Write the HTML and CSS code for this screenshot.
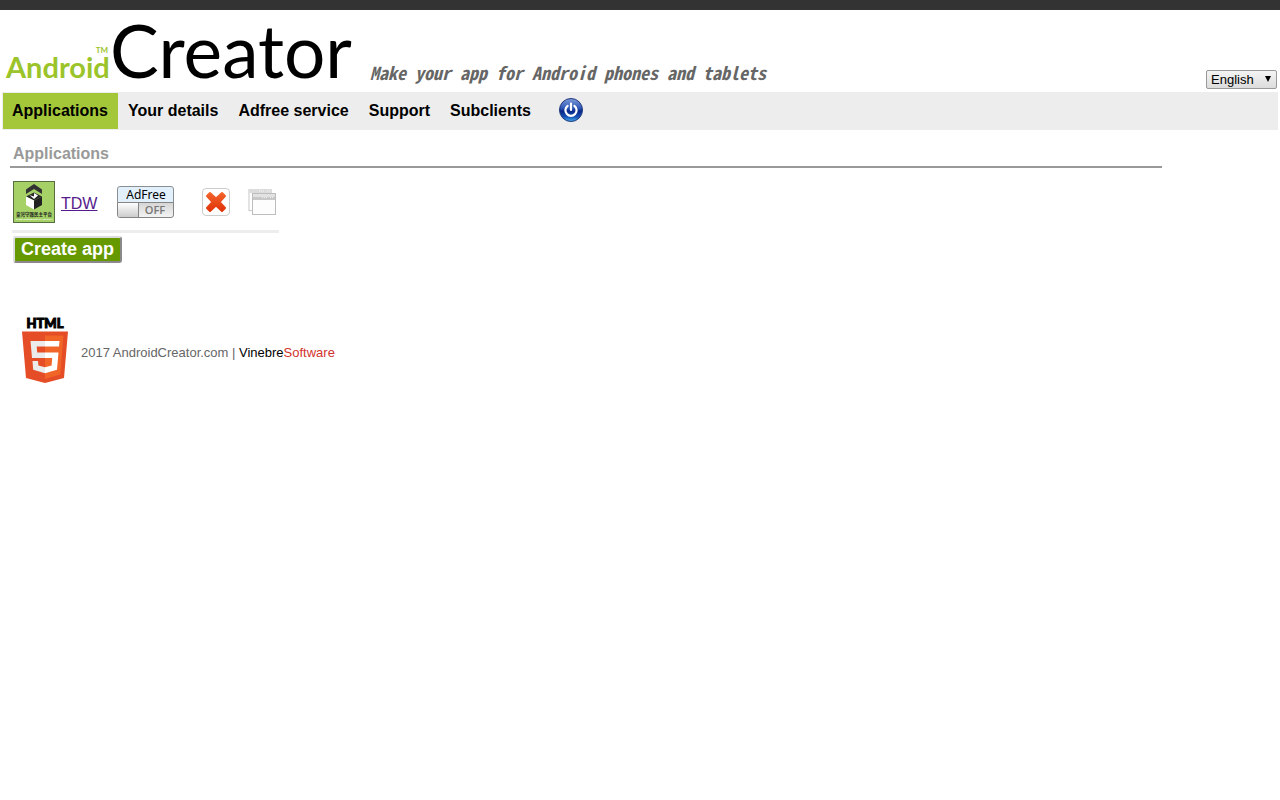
FILE: index.html
```html
<!DOCTYPE html>
<html lang="en">
<head>
<meta charset="utf-8">
<title>AndroidCreator</title>
<link rel="stylesheet" href="styles.css">
</head>
<body>
<div class="topbar"></div>
<header class="header">
  <a class="logo" href="#"><span class="logo-android">Android<span class="logo-tm">TM</span></span><span class="logo-creator">Creator</span></a>
  <p class="tagline">Make your app for Android phones and tablets</p>
  <div class="language">
    <select class="language-select" aria-label="Language"><option>English</option><option>Español</option></select>
    <svg class="language-arrow" width="6" height="6" viewBox="0 0 6 6"><path d="M0 0H6L3 6Z"/></svg>
  </div>
</header>
<nav class="nav">
  <a class="nav-item nav-active" href="#">Applications</a>
  <a class="nav-item" href="#">Your details</a>
  <a class="nav-item" href="#">Adfree service</a>
  <a class="nav-item" href="#">Support</a>
  <a class="nav-item" href="#">Subclients</a>
  <a class="power" href="#" aria-label="Log out">
    <svg width="24" height="24" viewBox="0 0 24 24">
      <defs>
        <linearGradient id="orb" x2="0" y2="1"><stop offset="0" stop-color="#7f9bd8"/><stop offset=".42" stop-color="#2f58b8"/><stop offset=".55" stop-color="#08288a"/><stop offset=".8" stop-color="#1650b4"/><stop offset="1" stop-color="#48b0f0"/></linearGradient>
      </defs>
      <circle cx="12" cy="12" r="11.500" fill="url(#orb)" stroke="#22397c"/>
      <path d="M8.600 7.800A5.600 5.600 0 1 0 15.400 7.800M12 5.500V12" fill="none" stroke="#fff" stroke-width="2.200" stroke-linecap="round"/>
    </svg>
  </a>
</nav>
<main class="main">
  <h1 class="title">Applications</h1>
  <div class="app-row">
    <svg class="app-icon" width="42" height="42" viewBox="0 0 84 84">
      <rect x="1" y="1" width="82" height="82" fill="#a5d167" stroke="#596d42" stroke-width="2"/>
      <path d="M26 17 42 6l16 11v9L42 16 26 26Z" fill="#333"/>
      <path d="M26 31l16-8 16 8-16 8Z" fill="#282828"/>
      <path d="M26 31l16 8v18l-16-9Z" fill="#fff"/>
      <path d="M42 39l16-8v17l-16 9Z" fill="#222"/>
      <path d="M33 28l9 3v-7l8 5-8 7Z" fill="#fff"/>
      <text class="icon-name" x="42" y="70" text-anchor="middle">臺灣守護民主平台</text>
      <text class="icon-sub" x="42" y="78" text-anchor="middle">TAIWAN DEMOCRACY WATCH</text>
    </svg>
    <a class="app-link" href="#">TDW</a>
    <button class="icon-button adfree" type="button" aria-label="AdFree off">
      <svg width="57" height="32" viewBox="0 0 57 32">
        <defs>
          <linearGradient id="off" x2="0" y2="1"><stop stop-color="#d5d5d5"/><stop offset="1" stop-color="#f4f4f4"/></linearGradient>
          <linearGradient id="knob" x2="0" y2="1"><stop stop-color="#fff"/><stop offset="1" stop-color="#ccc"/></linearGradient>
        </defs>
        <path d="M.5 16.500V3Q.5.5 3 .5H54Q56.500.5 56.500 3V16.500Z" fill="#e1f0fb" stroke="#8b8f92"/>
        <path d="M.5 16.500H56.500V29Q56.500 31.500 54 31.500H3Q.5 31.500.5 29Z" fill="url(#off)" stroke="#858585"/>
        <path d="M1 17H21V31H3Q1 31 1 29Z" fill="url(#knob)"/>
        <path d="M21.500 17V31" stroke="#858585"/>
        <text class="adfree-name" x="29" y="13" text-anchor="middle">AdFree</text>
        <text class="adfree-state" x="38" y="28" text-anchor="middle">OFF</text>
      </svg>
    </button>
    <button class="icon-button delete" type="button" aria-label="Delete">
      <svg width="28" height="28" viewBox="0 0 28 28">
        <defs><linearGradient id="cross" x2="0" y2="1"><stop stop-color="#f4642c"/><stop offset="1" stop-color="#e03208"/></linearGradient></defs>
        <rect x=".5" y=".5" width="27" height="27" rx="3.500" fill="#fff" stroke="#ccc"/>
        <path d="M5 8 8 5 14 10.500 20 5 23 8 17.500 14 23 20 20 23 14 17.500 8 23 5 20 10.500 14Z" fill="url(#cross)" stroke="url(#cross)" stroke-width="2" stroke-linejoin="round"/>
      </svg>
    </button>
    <button class="icon-button" type="button" aria-label="Duplicate">
      <svg width="28" height="28" viewBox="0 0 28 28">
        <rect x="1" y="1.500" width="22" height="21" fill="#fff" stroke="#c8c8c8"/>
        <rect x="1" y="1" width="23" height="4" fill="#dcdcdc"/>
        <path d="M11 3H17M19 3H22" stroke="#f4f4f4" stroke-dasharray="1 1"/>
        <rect x="4.500" y="5.500" width="23" height="21" fill="#fdfdfd" stroke="#bdbdbd"/>
        <rect x="5" y="6" width="22" height="3" fill="#e2e2e2"/>
        <rect x="5" y="9" width="22" height="3" fill="#c8c8c8"/>
        <path d="M14 9.500H19M22 9.500H26" stroke="#eee" stroke-dasharray="1 1"/>
      </svg>
    </button>
  </div>
  <button class="create" type="button">Create app</button>
</main>
<footer class="footer">
  <svg class="html-logo" width="46" height="64" viewBox="0 0 46 64">
    <text class="html-word" x="23" y="9" text-anchor="middle">HTML</text>
    <path d="M0 12.500H46L42 59 23 64 4 59Z" fill="#e44d26"/>
    <path d="M23 16.500H41.500L38.300 55.600 23 60Z" fill="#f16529"/>
    <path d="M23 22H8.500L10 39H23V33.500H15.200L14.700 27.500H23ZM23 48.200 16.400 46.400 16 42H10.500L11.200 50.700 23 54.200Z" fill="#ebebeb"/>
    <path d="M23 22H37.500L37 27.500H23ZM23 33.500H36.500L35 50.700 23 54.200V48.200L29.600 46.400 30.200 39H23Z" fill="#fff"/>
  </svg>
  <p class="copyright">2017 AndroidCreator.com | <a class="vendor" href="#">Vinebre<span class="vendor-red">Software</span></a></p>
</footer>
</body>
</html>
```
FILE: styles.css
```css
* { box-sizing: border-box; }
body { margin: 0; background: #fff; font-family: "Liberation Sans", Arial, sans-serif; font-size: 16px; color: #000; }
.topbar { height: 10px; background: #333; }
.header { display: flex; align-items: flex-end; height: 82px; padding: 0 3px 3px 6px; }
.logo { display: flex; align-items: baseline; font-family: Lato, sans-serif; line-height: 44px; color: #000; text-decoration: none; }
.logo-android { position: relative; width: 104px; font-size: 29px; font-weight: 700; color: #9bc42b; }
.logo-tm { position: absolute; right: 2px; top: -17px; font-size: 8px; }
.logo-creator { width: 260px; font-size: 73px; }
.tagline { margin: 0; font: italic bold 18px/34px "Noto Sans Mono CJK JP", "Noto Sans Mono CJK SC", "Liberation Mono", monospace; color: #666; white-space: nowrap; }
.language { position: relative; margin-left: auto; }
.language-select { display: block; width: 71px; height: 19px; padding: 0 4px; appearance: none; border: 1px solid #999; border-radius: 2px; background: linear-gradient(#f4f4f4, #dcdcdc); font: 13px/17px "Liberation Sans", Arial, sans-serif; color: #000; }
.language-arrow { position: absolute; right: 6px; top: 6px; pointer-events: none; }
.nav { display: flex; align-items: stretch; height: 38px; margin: 0 2px; padding: 1px; background: #ededed; }
.nav-item { padding: 0 10px; font-weight: bold; line-height: 36px; color: #000; text-decoration: none; }
.nav-active { padding: 0 10px 0 9px; background: #a4c639; }
.power { display: flex; align-items: center; margin-left: 18px; padding-bottom: 2px; }
.main { padding: 0 10px; }
.title { width: 1152px; max-width: 100%; margin: 14px 0 0; padding: 0 3px 2px; border-bottom: 2px solid #999; font-size: 16px; line-height: 20px; color: #999; }
.app-row { display: flex; align-items: center; width: 267px; margin: 10px 0 0 2px; padding: 3px 0 7px 1px; border-bottom: 3px solid #ededed; }
.app-link { width: 56px; margin-left: 6px; padding-top: 4px; color: #551a8b; }
.icon-button { display: block; padding: 0; border: 0; background: none; line-height: 0; }
.icon-button svg, .app-icon { display: block; }
.delete { margin: 0 18px 0 28px; }
.adfree-name { font: 12px "Noto Sans", sans-serif; fill: #000; }
.adfree-state { font: 600 11px "Open Sans", sans-serif; fill: #777; }
.icon-name { font: bold 9px "Noto Sans CJK TC", sans-serif; fill: #222; }
.icon-sub { font: bold 5px "Liberation Sans", sans-serif; fill: #fff; }
.create { display: block; height: 27px; margin: 3px 0 0 3px; padding: 0 6px; border: 2px outset #ddd; border-radius: 3px; background: #690; font: bold 18px/21px "Liberation Sans", Arial, sans-serif; color: #fff; }
.footer { display: flex; align-items: center; gap: 13px; margin-top: 56px; padding-left: 22px; }
.html-logo { overflow: visible; }
.html-word { font: 900 13px Lato, sans-serif; fill: #000; stroke: #000; stroke-width: 1px; }
.copyright { margin: 0; padding-top: 3px; font-size: 13px; line-height: 16px; color: #666; }
.vendor { color: #000; text-decoration: none; }
.vendor-red { color: #d2322d; }
```
